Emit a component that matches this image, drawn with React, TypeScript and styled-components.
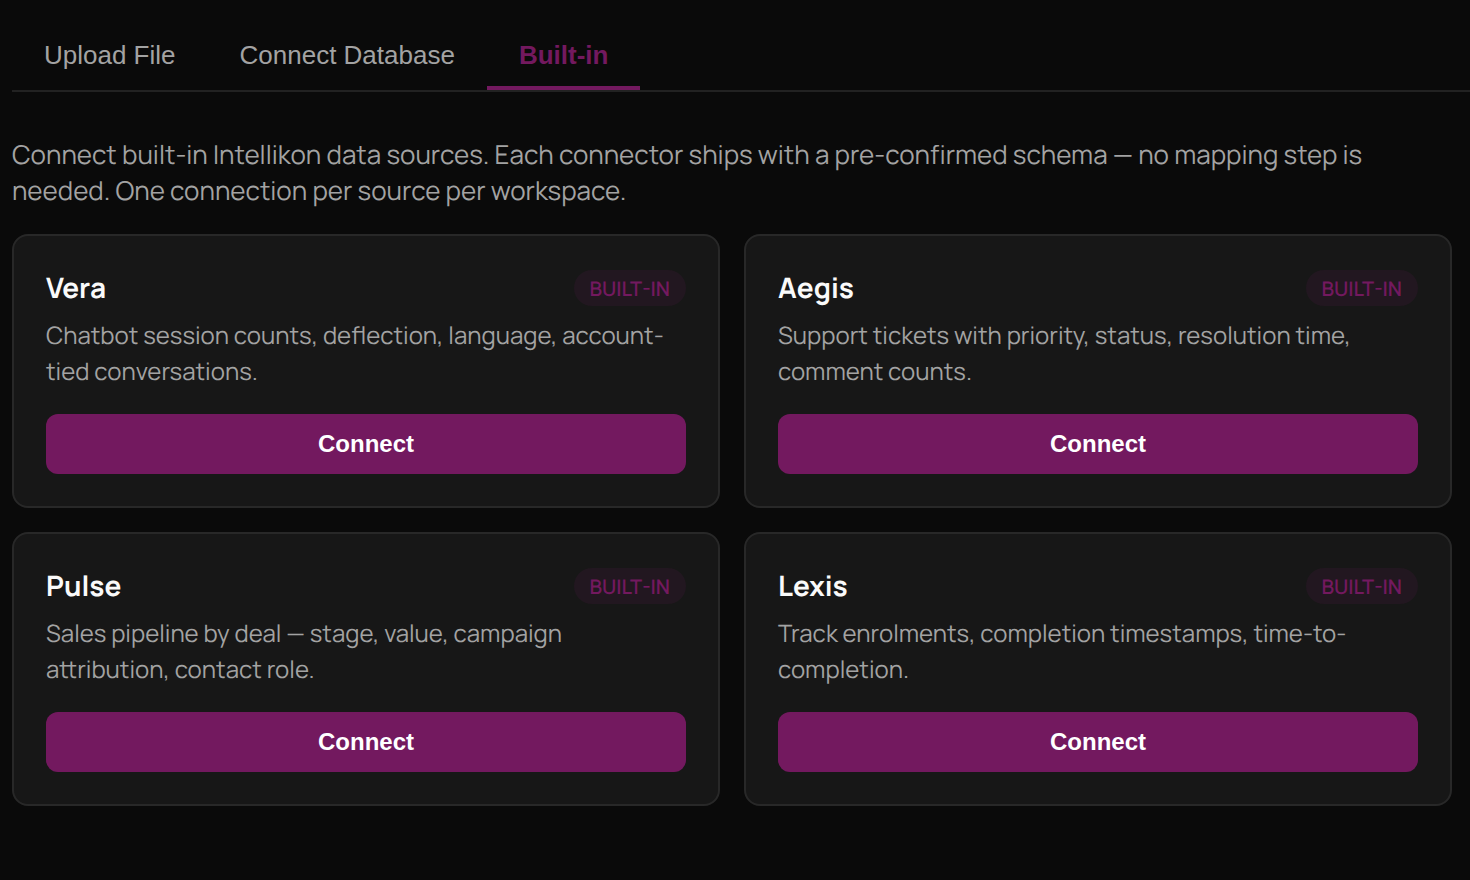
import React, { useState } from "react";
import styled, { createGlobalStyle } from "styled-components";

const GlobalStyle = createGlobalStyle`
  *, *::before, *::after { box-sizing: border-box; }
  body {
    margin: 0;
    background: #0a0a0a;
    color: #fafafa;
    font-family: Manrope, Inter, "Liberation Sans", sans-serif;
    text-rendering: geometricPrecision;
  }
`;

const Page = styled.main`
  min-height: 100vh;
  padding: 24px 0 24px 12px;
`;

const TabBar = styled.div`
  display: flex;
  border-bottom: 2px solid #222222;
`;

const Tab = styled.button<{ $active: boolean }>`
  padding: 16px 32px;
  border: 0;
  border-bottom: 4px solid ${(p) => (p.$active ? "#73195f" : "transparent")};
  background: none;
  color: ${(p) => (p.$active ? "#73195f" : "#a3a3a3")};
  font-family: "Liberation Sans", Arial, sans-serif;
  font-size: 26px;
  font-weight: ${(p) => (p.$active ? 600 : 400)};
  line-height: 30px;
  cursor: pointer;
`;

const Panel = styled.section`
  display: grid;
  gap: 26px;
  padding: 44px 18px 0 0;
`;

const Intro = styled.p`
  margin: 0;
  color: #a3a3a3;
  font-size: 26px;
  line-height: 36px;
`;

const CardGrid = styled.div`
  display: grid;
  grid-template-columns: repeat(2, minmax(0, 1fr));
  gap: 24px;
`;

const Card = styled.article`
  display: flex;
  flex-direction: column;
  padding: 32px;
  border: 2px solid #282828;
  border-radius: 16px;
  background: #171717;
`;

const CardHeader = styled.header`
  display: flex;
  align-items: center;
  justify-content: space-between;
  margin-bottom: 10px;
`;

const CardTitle = styled.h2`
  margin: 0;
  font-size: 28px;
  font-weight: 700;
  line-height: 40px;
`;

const Badge = styled.span`
  padding: 5px 16px 3px;
  border-radius: 18px;
  background: rgba(115, 25, 95, 0.12);
  color: #73195f;
  font-size: 20px;
  font-weight: 600;
  line-height: 28px;
  text-transform: uppercase;
`;

const Description = styled.p`
  margin: 0 0 24px;
  color: #a3a3a3;
  font-size: 24px;
  line-height: 36px;
`;

const ConnectButton = styled.button`
  margin-top: auto;
  padding: 16px;
  border: 0;
  border-radius: 12px;
  background: #73195f;
  color: #ffffff;
  font-family: "Liberation Sans", Arial, sans-serif;
  font-size: 24px;
  font-weight: 600;
  line-height: 28px;
  cursor: pointer;
`;

const tabs = ["Upload File", "Connect Database", "Built-in"];

const connectors = [
  {
    name: "Vera",
    description: "Chatbot session counts, deflection, language, account-tied conversations.",
  },
  {
    name: "Aegis",
    description: "Support tickets with priority, status, resolution time, comment counts.",
  },
  {
    name: "Pulse",
    description: "Sales pipeline by deal — stage, value, campaign attribution, contact role.",
  },
  {
    name: "Lexis",
    description: "Track enrolments, completion timestamps, time-to-completion.",
  },
];

export default function App() {
  const [active, setActive] = useState("Built-in");

  return (
    <>
      <GlobalStyle />
      <Page>
        <TabBar role="tablist">
          {tabs.map((tab) => (
            <Tab
              key={tab}
              type="button"
              role="tab"
              aria-selected={tab === active}
              $active={tab === active}
              onClick={() => setActive(tab)}
            >
              {tab}
            </Tab>
          ))}
        </TabBar>
        <Panel role="tabpanel" aria-label={active}>
          <Intro>
            Connect built-in Intellikon data sources. Each connector ships with a pre-confirmed
            schema — no mapping step is needed. One connection per source per workspace.
          </Intro>
          <CardGrid>
            {connectors.map(({ name, description }) => (
              <Card key={name}>
                <CardHeader>
                  <CardTitle>{name}</CardTitle>
                  <Badge>Built-in</Badge>
                </CardHeader>
                <Description>{description}</Description>
                <ConnectButton type="button">Connect</ConnectButton>
              </Card>
            ))}
          </CardGrid>
        </Panel>
      </Page>
    </>
  );
}
